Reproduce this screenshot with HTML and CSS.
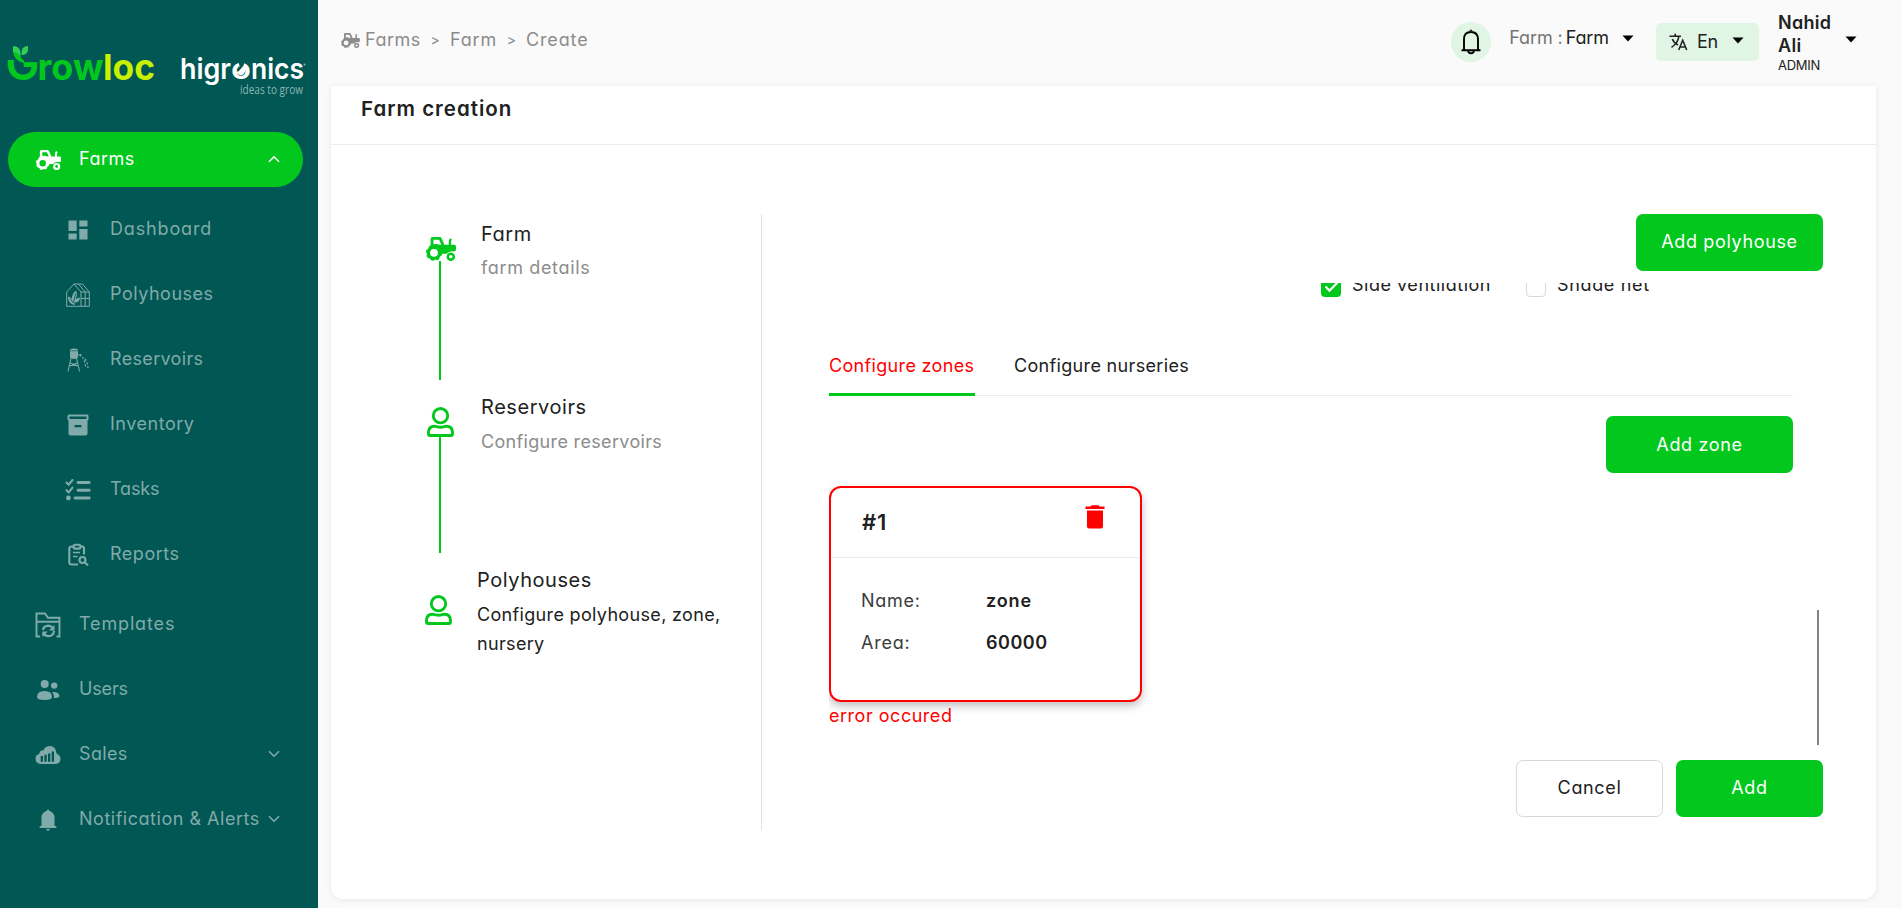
FILE: index.html
```html
<!DOCTYPE html>
<html lang="en">
<head>
<meta charset="utf-8">
<title>Farm creation</title>
<link rel="stylesheet" href="styles.css">
</head>
<body>
<svg class="sprite" aria-hidden="true">
  <symbol id="tractor" viewBox="0 0 30 24">
    <path fill-rule="evenodd" d="M4.6 7.600V2Q4.600 0 6.600 0H13.600Q15 0 15.600 1.300L18.400 7.800H22.700V5.200Q22.700 3 24.200 1.300L26 2.600Q25.100 3.800 25.100 5.200V7.800H28.300Q30 7.800 30 9.500V12.200Q30 13.800 28.800 14.600Q23.500 13.200 20.600 16.800H14.800L13 11H4.600ZM7.500 2.700V7.200Q11 6.400 13.600 7.800H15.300L13.100 2.700Z"/>
    <circle cx="8" cy="15.800" r="5.600" fill="none" stroke="currentColor" stroke-width="3.400"/>
    <circle cx="8" cy="15.800" r="7.400" fill="none" stroke="currentColor" stroke-width="1.400" stroke-dasharray="3.300 2.510"/>
    <circle cx="24.800" cy="19.800" r="3" fill="none" stroke="currentColor" stroke-width="2.500"/>
  </symbol>
  <symbol id="person" viewBox="0 0 27 30">
    <g fill="none" stroke="currentColor" stroke-width="2.900">
      <circle cx="13.500" cy="8.700" r="7.200"/>
      <path d="M1.500 27V25.500Q1.500 19.200 7.500 19.200Q10.500 20.200 13.500 20.200T19.500 19.200Q25.500 19.200 25.500 25.500V27Q25.500 28.500 24 28.500H3Q1.500 28.500 1.500 27Z"/>
    </g>
  </symbol>
  <symbol id="chev" viewBox="0 0 12 8"><path d="M1 1.200L6 6.200L11 1.200" fill="none" stroke="currentColor" stroke-width="1.600"/></symbol>
  <symbol id="caret" viewBox="0 0 12 7"><path d="M.5 .5H11.500L6 6.500Z"/></symbol>
</svg>
<div class="app">
  <aside class="sidebar">
    <svg class="logo" width="318" height="62" viewBox="0 38 318 62">
      <defs><clipPath id="gclip"><path d="M0 60H45V90H0Z"/></clipPath></defs>
      <g class="logo-grow">
        <text class="logo-g" x="5.500" y="79.500" font-size="46" textLength="34" lengthAdjust="spacingAndGlyphs" clip-path="url(#gclip)">G</text>
        <text x="37.500" y="79.500" font-size="36" textLength="66" lengthAdjust="spacingAndGlyphs">row</text>
        <text class="logo-loc" x="103" y="79.500" font-size="36" textLength="52" lengthAdjust="spacingAndGlyphs">loc</text>
      </g>
      <path fill="#2fd05a" d="M13 46Q20 46 20.500 53V56Q13 56 13 51ZM28 46V49Q28 55 21.500 55V53Q21.500 46 28 46Z"/>
      <path fill="#02c81e" d="M13 51Q17 52 20.500 56Q21 59 24 60.500V63Q14 61 13 51Z"/>
      <g class="logo-hi">
        <text x="180" y="79" font-size="29" textLength="51" lengthAdjust="spacingAndGlyphs">higr</text>
        <text x="231" y="79" font-size="29" textLength="20" lengthAdjust="spacingAndGlyphs">o</text>
        <text x="251" y="79" font-size="29" textLength="53" lengthAdjust="spacingAndGlyphs">nics</text>
      </g>
      <path fill="#015754" d="M238 59H245L243.500 66H239.500Z"/>
      <path fill="#fff" d="M236 72Q240 71 241.500 68L246 64Q246.500 75 240.500 75.500Q238 75 236 72Z"/>
      <circle cx="304.500" cy="64.500" r="1" fill="#8fb5b3"/>
      <text class="logo-tag" x="240" y="93.500" font-size="12" textLength="63" lengthAdjust="spacingAndGlyphs">ideas to grow</text>
    </svg>
    <nav class="nav">
      <a class="item active"><svg class="ico" width="25" height="20"><use href="#tractor"/></svg><span>Farms</span><svg class="arrow up" width="12" height="8"><use href="#chev"/></svg></a>
      <div class="sub">
        <a class="item"><svg class="ico" width="24" height="24" viewBox="0 0 24 24"><path d="M2.500 2.500h8.200v10.600H2.500zM13.300 2.500h8.200v6h-8.200zM13.300 11h8.200v10.500h-8.200zM2.500 15.500h8.200v6H2.500z"/></svg><span class="ls-8">Dashboard</span></a>
        <a class="item"><svg class="ico" width="24" height="24" viewBox="0 0 24 24"><g fill="none" stroke="currentColor" stroke-width="1"><path d="M.7 23.300V9L8 1H16.500L23.300 9V23.300ZM8 1L15 9V23.300M15 9H23.300M12.500 1L19.200 9V23.300M15 15.500H23.300"/></g><path d="M8 22Q1.500 20 2 13.500Q5 14 6 16Q5.500 11 10 7.500Q12 12 9.500 16.500Q11 14.500 14 14.500Q13.500 20 8.600 19.500V22Z"/><path d="M4 15.500L7.500 20L9.500 10.500" fill="none" stroke="#015754" stroke-width=".8"/></svg><span>Polyhouses</span></a>
        <a class="item"><svg class="ico" width="24" height="24" viewBox="0 0 24 24"><path d="M4 1.500Q8 -.5 12 1.500V9.500Q8 12.500 4 9.500Z"/><path d="M3.500 2.800H12.500" stroke="#015754" stroke-width=".6"/><g fill="none" stroke="currentColor"><path d="M5 10L2 23.500M10.500 10L13.500 23.500M3.500 17.500H12.500M3.500 14.500L11.500 18M12 14.500L4.500 18" stroke-width="1.100"/><path d="M12 7H15.500M14.500 6V8.500" stroke-width="1.200"/><path d="M16.500 9Q19 13 20 20M19 11Q21.500 14 22 20" stroke-width="1.300" stroke-dasharray="2 2"/></g></svg><span class="ls-3">Reservoirs</span></a>
        <a class="item"><svg class="ico" width="24" height="24" viewBox="0 0 24 24"><path fill-rule="evenodd" d="M3 1.500H21Q22.500 1.500 22.500 3V6Q22.500 7.300 21.500 7.500V20.500Q21.500 22.500 19.500 22.500H4.500Q2.500 22.500 2.500 20.500V7.500Q1.500 7.300 1.500 6V3Q1.500 1.500 3 1.500ZM3.500 3.500V6H20.500V3.500ZM8.500 12V14.200H15.500V12Z"/></svg><span>Inventory</span></a>
        <a class="item"><svg class="ico" width="26" height="24" viewBox="0 0 26 24"><g fill="none" stroke="currentColor" stroke-linecap="round" stroke-linejoin="round"><path stroke-width="2.900" d="M13 4.500H24.200M13 12.200H24.200M10 20H24.200"/><path stroke-width="2.100" d="M1.500 4.500L3.700 6.700L7.500 2M1.500 12.200L3.700 14.400L7.500 9.700"/></g><circle cx="3.400" cy="20" r="2.400"/></svg><span class="ls-0">Tasks</span></a>
        <a class="item"><svg class="ico" width="24" height="24" viewBox="0 0 24 24"><g fill="none" stroke="currentColor" stroke-width="2.100"><path d="M12 21.500H5.500Q3.300 21.500 3.300 19.500V5.500Q3.300 3.500 5.500 3.500H7.500M14.500 3.500H16Q18 3.500 18 5.500V11.500"/><rect x="7.500" y="1.800" width="7" height="3.800" rx="1.800"/><path d="M7 9.500H14M7 13.500H11.500" stroke-width="1.600"/><circle cx="16.500" cy="17" r="3"/><path d="M18.700 19.300L22 22.600"/></g></svg><span>Reports</span></a>
      </div>
      <a class="item"><svg class="ico" width="26" height="26" viewBox="0 0 26 26"><g fill="none" stroke="currentColor" stroke-width="1.900"><path d="M5 24.500H1.500V1.500H10L13 5.800H24.500V24.500H21.500M1.500 9.800H24.500"/><path stroke-width="2.200" d="M8 18Q8.500 14 13.500 13.700Q16.500 14 18 16.500M19 19Q18.500 24 13.500 24.200Q10 24 9 21.500"/></g><path d="M19.500 13V18.500H14ZM7.300 25V19.500H12.800Z"/></svg><span class="ls-8">Templates</span></a>
      <a class="item"><svg class="ico" width="24" height="22" viewBox="0 0 24 22"><circle cx="8.700" cy="5" r="4"/><circle cx="18.200" cy="6.600" r="3.200"/><path d="M1 18Q1 12 8.500 12Q16 12 16 18Q16 21 8.500 21T1 18ZM16 13Q23 12.500 23.500 17Q23 19 18 19Q18 15 16 13Z"/></svg><span class="ls-0">Users</span></a>
      <a class="item"><svg class="ico" width="26" height="20" viewBox="0 0 26 20"><path fill-rule="evenodd" d="M6 19Q.5 18.800 .5 13.500Q.7 9.500 4.200 9Q4.500 5 8.500 5.200Q10.500 .8 15.500 1Q21 1.500 21.500 8.500Q25.500 10 25.500 14Q25.300 19 20 19ZM5.700 11V16.800H8V11ZM9.400 9.800V16.800H11.700V9.800ZM13 8.500V16.800H15.300V8.500ZM16.700 6.500V16.800H19V6.500Z"/></svg><span class="ls-3">Sales</span><svg class="arrow" width="12" height="8"><use href="#chev"/></svg></a>
      <a class="item"><svg class="ico" width="18" height="22" viewBox="0 0 18 22"><path d="M7.500 2Q9 -.8 10.500 2Q15.500 3.500 15.500 9V16.500L17.500 17.800V19H.5V17.800L2.500 16.500V9Q2.500 3.500 7.500 2ZM7 20H11Q10.500 21.800 9 21.800T7 20Z"/></svg><span>Notification &amp; Alerts</span><svg class="arrow" width="12" height="8"><use href="#chev"/></svg></a>
    </nav>
  </aside>
  <main class="main">
    <header class="top">
      <div class="crumbs"><svg width="19" height="15"><use href="#tractor"/></svg><span>Farms</span><i>&gt;</i><span class="ls-8">Farm</span><i>&gt;</i><span class="ls-8">Create</span></div>
      <div class="bell"><svg width="20" height="26" viewBox="0 0 20 26"><g fill="none" stroke="#000" stroke-width="1.900"><path d="M.5 21.300H19.500M3 21V10.500Q3 3 10 3T17 10.500V21"/><path d="M7.200 21.500Q7.200 24.300 10 24.300T12.800 21.500"/></g><path d="M8.700 3V1.500Q10 -.5 11.300 1.500V3Z"/></svg></div>
      <div class="farm"><em>Farm :</em><span>Farm</span><svg width="12" height="7"><use href="#caret"/></svg></div>
      <div class="lang"><svg width="19" height="18" viewBox="0 0 19 18"><g fill="none" stroke="#222" stroke-width="1.600"><path d="M.5 3.200H12M6.200 .8V3.200M2.500 14.300Q9 10 9.800 3.500M3.300 6Q4.500 9.300 9 12"/><path d="M9.700 17L13.700 7.300L17.700 17M11 14H16.400"/></g></svg><span>En</span><svg class="lc" width="12" height="7"><use href="#caret"/></svg></div>
      <div class="user"><div><b>Nahid</b><b>Ali</b><small>ADMIN</small></div><svg width="12" height="7"><use href="#caret"/></svg></div>
    </header>
    <section class="card">
      <h1>Farm creation</h1>
      <div class="body">
        <div class="steps">
          <div class="step s1"><div class="mark"><svg width="30" height="24"><use href="#tractor"/></svg></div><div class="txt"><h2>Farm</h2><p class="ls-6">farm details</p></div></div>
          <div class="step s2"><div class="mark"><svg width="27" height="30"><use href="#person"/></svg></div><div class="txt"><h2>Reservoirs</h2><p class="ls-3">Configure reservoirs</p></div></div>
          <div class="step s3"><div class="mark"><svg width="27" height="30"><use href="#person"/></svg></div><div class="txt"><h2>Polyhouses</h2><p class="ls-3">Configure polyhouse, zone,<br>nursery</p></div></div>
        </div>
        <div class="pane">
          <div class="row"><button class="btn wide">Add polyhouse</button></div>
          <div class="scroll">
            <div class="content">
              <div class="checks">
                <label><svg class="box on" width="20" height="20" viewBox="0 0 20 20"><path d="M4.500 9.500L8.500 13.700L16.500 5.500" fill="none" stroke="#fff" stroke-width="2.200"/></svg><span>Side ventilation</span></label>
                <label><span class="box"></span><span class="ls-6">Shade net</span></label>
              </div>
              <div class="tabs ls-3"><a class="sel">Configure zones</a><a>Configure nurseries</a></div>
              <div class="row zone-row"><button class="btn wide">Add zone</button></div>
              <div class="zone">
                <div class="zhead"><b>#1</b><svg width="20" height="24" viewBox="0 0 20 24"><path d="M.5 1.500H5.500L6.500 .3H13.500L14.500 1.500H19.500V4H.5ZM2 5.500H18V21.500Q18 23.500 16 23.500H4Q2 23.500 2 21.500Z"/></svg></div>
                <dl><dt>Name:</dt><dd class="ls-8">zone</dd><dt>Area:</dt><dd>60000</dd></dl>
              </div>
              <p class="err">error occured</p>
            </div>
            <div class="thumb"></div>
          </div>
          <div class="row foot"><button class="btn ghost">Cancel</button><button class="btn">Add</button></div>
        </div>
      </div>
    </section>
  </main>
</div>
</body>
</html>
```
FILE: styles.css
```css
* { box-sizing: border-box; }
body, h1, h2, p, dl, dd { margin: 0; }
body { font: 18px/28px Inter, "Noto Sans", sans-serif; font-feature-settings: "cv11"; letter-spacing: .52px; color: #212121; background: #fafafa; }
svg { fill: currentColor; flex: none; display: block; }
.sprite { position: absolute; width: 0; height: 0; }
.ls-0 { letter-spacing: -.15px; }
.ls-3 { letter-spacing: .33px; }
.ls-6 { letter-spacing: .65px; }
.ls-8 { letter-spacing: .85px; }
.app { display: flex; height: 908px; overflow: hidden; }
.sidebar { width: 318px; background: #015754; color: #80abaa; padding-top: 38px; flex: none; }
.logo { letter-spacing: 0; }
.logo text { font-family: Inter, sans-serif; }
.logo-grow { font-weight: 700; fill: #02c81e; }
.logo-g { font-weight: 600; }
.logo-loc { fill: #c8f000; }
.logo-hi { font-weight: 600; fill: #fff; }
.logo .logo-tag { font-family: "Open Sans", sans-serif; font-weight: 400; fill: #8fb5b3; }
.nav { padding: 32px 15px 0 8px; display: flex; flex-direction: column; gap: 10px; }
.item { display: grid; grid-template-columns: 80px 1fr 36px; height: 55px; align-items: center; border-radius: 28px; white-space: nowrap; }
.item > span { margin: -2px 0 0 -9px; justify-self: start; }
.item .ico { justify-self: center; }
.active { background: #02c81e; color: #fff; }
.arrow { justify-self: start; margin: -1px 0 0 1px; }
.up { transform: scaleY(-1); }
.sub { display: flex; flex-direction: column; gap: 10px; padding: 5px 0 5px 30px; }
.sub .item > span { margin-left: -8px; }
.main { flex: 1; padding: 0 26px 9px 13px; display: flex; flex-direction: column; }
.top { height: 86px; display: flex; align-items: flex-start; }
.crumbs { display: flex; align-items: center; margin: 26px auto 0 10px; color: #8c8c8c; }
.crumbs svg { margin-right: 5px; }
.crumbs i { font-style: normal; font-size: 14px; width: 29px; text-align: center; }
.bell { width: 40px; height: 40px; border-radius: 50%; background: #e0f5e4; margin-top: 22px; display: grid; place-items: center; }
.farm { display: flex; align-items: center; margin: 24px 0 0 18px; letter-spacing: -.1px; }
.farm em { font-style: normal; color: #757575; margin-right: 3px; }
.farm svg { margin-left: 13px; color: #000; }
.lang { width: 103px; height: 38px; margin: 23px 0 0 22px; background: #e0f5e4; border-radius: 5px; display: flex; align-items: center; padding: 0 15px 0 13px; letter-spacing: -.2px; }
.lang span { margin-left: 9px; }
.lc { margin: -4px 0 0 auto; color: #000; }
.user { display: flex; margin: 11px 19px 0 19px; width: 79px; justify-content: space-between; }
.user b, .user small { display: block; line-height: 23px; font-weight: 600; letter-spacing: .3px; }
.user small { font-size: 13px; line-height: 17px; font-weight: 400; letter-spacing: -.3px; }
.user svg { margin-top: 25px; color: #000; }
.card { flex: 1; background: #fff; border-radius: 0 0 12px 12px; box-shadow: 0 1px 6px rgba(0,0,0,.08); }
.card h1 { height: 59px; border-bottom: 1px solid #ebebeb; padding: 9px 30px 0; font-size: 20.5px; font-weight: 600; line-height: 28px; letter-spacing: 1px; }
.body { display: flex; padding: 69px 53px 0 94px; }
.steps { width: 337px; height: 616px; border-right: 1px solid #e0e0e0; }
.step { display: flex; height: 173px; }
.mark { width: 56px; color: #02c81e; padding: 23px 0 0 1px; flex: none; }
.mark::after { content: ""; display: block; width: 2px; height: 119px; margin-left: 13px; background: #02c81e; }
.s2 .mark { padding: 20px 0 0 2px; }
.s2 .mark::after { height: 116px; margin-left: 12px; }
.s3 .mark { width: 52px; padding: 35px 0 0; }
.s3 .mark::after { display: none; }
.txt { padding-top: 8px; white-space: nowrap; }
.txt h2 { font-size: 20px; line-height: 24px; font-weight: 400; letter-spacing: .55px; }
.txt p { margin-top: 8px; line-height: 29px; color: #8c8c8c; }
.s1 p { margin-top: 7px; }
.s3 p { color: #212121; }
.pane { flex: 1; padding-left: 67px; }
.row { display: flex; justify-content: flex-end; }
.btn { width: 147px; height: 57px; border: 0; border-radius: 7px; background: #02c81e; color: #fff; font: inherit; font-feature-settings: inherit; letter-spacing: .65px; white-space: nowrap; padding: 0 0 2px; }
.wide { width: 187px; }
.zone-row .btn { padding-bottom: 0; }
.ghost { background: #fff; border: 1px solid #d9d9d9; color: #212121; }
.scroll { height: 462px; margin-top: 12px; overflow: hidden; display: flex; }
.content { width: 964px; }
.thumb { width: 2px; height: 135px; margin: 327px 0 0 24px; background: #828486; }
.checks { display: flex; margin: -12px 0 0 492px; gap: 35px; }
.checks label { display: flex; align-items: center; gap: 11px; height: 28px; }
.box { width: 20px; height: 20px; border-radius: 4px; border: 1px solid #d9d9d9; margin-top: 3px; }
.on { border: 0; background: #02c81e; }
.tabs { display: flex; gap: 39px; margin-top: 53px; height: 44px; border-bottom: 1px solid #ebebeb; }
.tabs a { height: 44px; }
.tabs .sel { width: 146px; color: #f00; border-bottom: 3px solid #02c81e; }
.zone-row { margin-top: 20px; }
.zone { width: 313px; height: 216px; margin-top: 13px; border: 2px solid #f00; border-radius: 12px; box-shadow: 0 4px 8px rgba(0,0,0,.25); }
.zhead { height: 70px; display: flex; justify-content: space-between; padding: 17px 35px 0 31px; border-bottom: 1px solid #ebebeb; color: #f00; }
.zhead b { font-size: 22px; line-height: 35px; font-weight: 600; letter-spacing: .8px; color: #212121; }
.zone dl { display: grid; grid-template-columns: 125px 1fr; grid-auto-rows: 42px; align-items: center; padding: 22px 30px; }
.zone dt { color: #3c3c3c; letter-spacing: .75px; }
.zone dd { font-weight: 600; }
.err { color: #f00; }
.foot { gap: 13px; margin-top: 15px; }
```
